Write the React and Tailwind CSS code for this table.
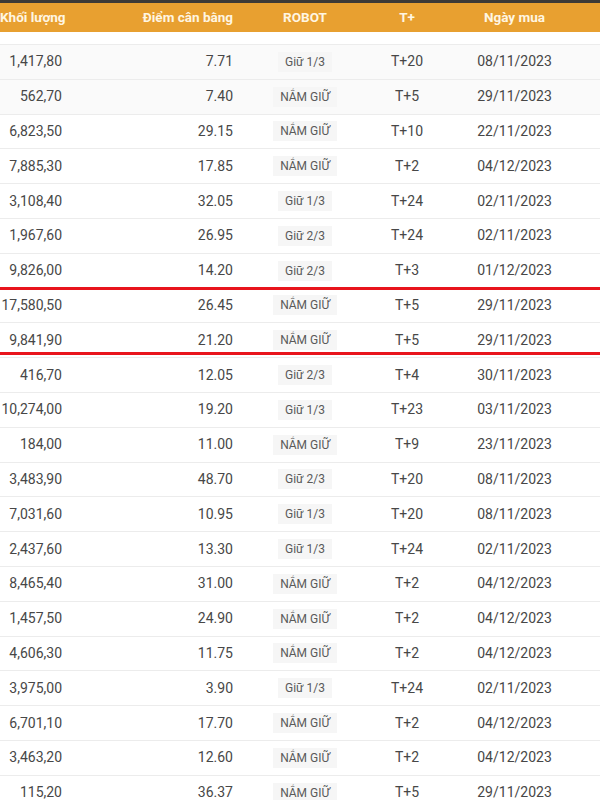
import React from "react";

const rows = [
  ["1,417,80", "7.71", "Giữ 1/3", "T+20", "08/11/2023"],
  ["562,70", "7.40", "NẮM GIỮ", "T+5", "29/11/2023"],
  ["6,823,50", "29.15", "NẮM GIỮ", "T+10", "22/11/2023"],
  ["7,885,30", "17.85", "NẮM GIỮ", "T+2", "04/12/2023"],
  ["3,108,40", "32.05", "Giữ 1/3", "T+24", "02/11/2023"],
  ["1,967,60", "26.95", "Giữ 2/3", "T+24", "02/11/2023"],
  ["9,826,00", "14.20", "Giữ 2/3", "T+3", "01/12/2023"],
  ["17,580,50", "26.45", "NẮM GIỮ", "T+5", "29/11/2023"],
  ["9,841,90", "21.20", "NẮM GIỮ", "T+5", "29/11/2023"],
  ["416,70", "12.05", "Giữ 2/3", "T+4", "30/11/2023"],
  ["10,274,00", "19.20", "Giữ 1/3", "T+23", "03/11/2023"],
  ["184,00", "11.00", "NẮM GIỮ", "T+9", "23/11/2023"],
  ["3,483,90", "48.70", "Giữ 2/3", "T+20", "08/11/2023"],
  ["7,031,60", "10.95", "Giữ 1/3", "T+20", "08/11/2023"],
  ["2,437,60", "13.30", "Giữ 1/3", "T+24", "02/11/2023"],
  ["8,465,40", "31.00", "NẮM GIỮ", "T+2", "04/12/2023"],
  ["1,457,50", "24.90", "NẮM GIỮ", "T+2", "04/12/2023"],
  ["4,606,30", "11.75", "NẮM GIỮ", "T+2", "04/12/2023"],
  ["3,975,00", "3.90", "Giữ 1/3", "T+24", "02/11/2023"],
  ["6,701,10", "17.70", "NẮM GIỮ", "T+2", "04/12/2023"],
  ["3,463,20", "12.60", "NẮM GIỮ", "T+2", "04/12/2023"],
  ["115,20", "36.37", "NẮM GIỮ", "T+5", "29/11/2023"],
];

const grid = "grid grid-cols-[72px_171px_124px_80px_135px_1fr] items-center";

export default function App() {
  return (
    <div className="w-[600px] h-[800px] overflow-hidden bg-white font-['Roboto','Liberation_Sans',sans-serif]">
      <div className="h-[3px] bg-[#3d3a36]" />
      <div className={`${grid} h-[29px] bg-[#e8a030] text-[13.5px] font-bold text-[#fff6e2]`}>
        <div className="text-right pr-[10px] whitespace-nowrap">Khối lượng</div>
        <div className="text-right pr-[10px]">Điểm cân bằng</div>
        <div className="text-center">ROBOT</div>
        <div className="text-center">T+</div>
        <div className="text-center">Ngày mua</div>
        <div />
      </div>
      <div className="h-[13px] border-b border-[#ececec]" />
      <div className="relative">
        {rows.map((r, i) => (
          <div
            key={i}
            className={`${grid} h-[34.8px] border-b border-[#ececec] text-[14px] text-[#474747] ${i < 2 ? "bg-[#fafafa]" : "bg-white"}`}
          >
            <div className="text-right pr-[10px] whitespace-nowrap">{r[0]}</div>
            <div className="text-right pr-[10px]">{r[1]}</div>
            <div className="flex justify-center">
              <span className="bg-[#f6f6f6] px-[7px] py-[2px] text-[12px] text-[#5a5a5a] leading-[16px]">{r[2]}</span>
            </div>
            <div className="text-center">{r[3]}</div>
            <div className="text-center">{r[4]}</div>
            <div />
          </div>
        ))}
        <div className="absolute left-0 right-0 top-[242px] h-[68px] border-y-[3px] border-[#e8141c] pointer-events-none" />
      </div>
    </div>
  );
}
